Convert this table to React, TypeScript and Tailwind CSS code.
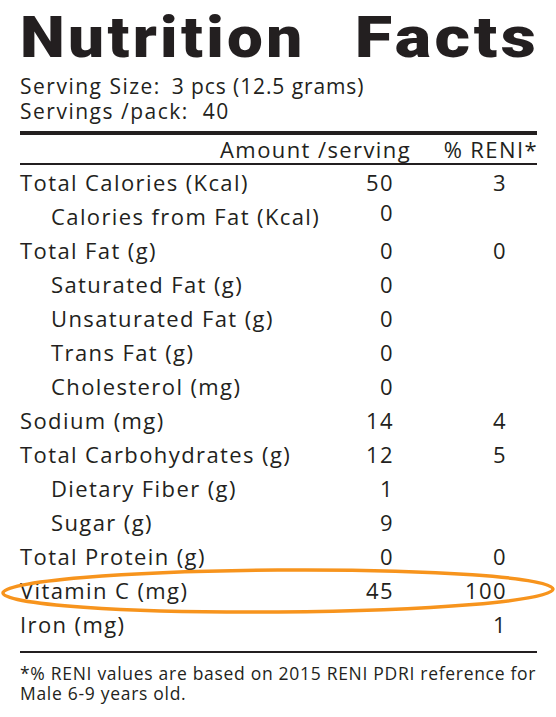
const rows = [
  { label: 'Total Calories (Kcal)', amount: '50', reni: '3' },
  { label: 'Calories from Fat (Kcal)', amount: '0', reni: '', sub: true, raised: true },
  { label: 'Total Fat (g)', amount: '0', reni: '0' },
  { label: 'Saturated Fat (g)', amount: '0', reni: '', sub: true },
  { label: 'Unsaturated Fat (g)', amount: '0', reni: '', sub: true },
  { label: 'Trans Fat (g)', amount: '0', reni: '', sub: true },
  { label: 'Cholesterol (mg)', amount: '0', reni: '', sub: true },
  { label: 'Sodium (mg)', amount: '14', reni: '4' },
  { label: 'Total Carbohydrates (g)', amount: '12', reni: '5' },
  { label: 'Dietary Fiber (g)', amount: '1', reni: '', sub: true },
  { label: 'Sugar (g)', amount: '9', reni: '', sub: true },
  { label: 'Total Protein (g)', amount: '0', reni: '0' },
  { label: 'Vitamin C (mg)', amount: '45', reni: '100' },
  { label: 'Iron (mg)', amount: '', reni: '1' },
];

export default function App() {
  return (
    <div className="relative w-[556px] h-[717px] bg-white text-[#231f20] font-['Open_Sans',sans-serif] overflow-hidden">
      <div className="pl-[20px] pr-[19px]">
        {/* Title */}
        <div className="flex justify-between pt-[8px] text-[58px] leading-[58px] font-black font-['Roboto',sans-serif] tracking-[3px]">
          <span className="inline-block origin-left scale-x-[1.1]">Nutrition</span>
          <span className="inline-block origin-right scale-x-[1.18] -mr-[2px]">Facts</span>
        </div>

        {/* Serving info */}
        <div className="mt-[8px] text-[21px] leading-[25px]">
          <div>
            <span className="tracking-[1.5px]">Serving Size:</span>&nbsp; <span className="tracking-[0.9px]">3 pcs (12.5 grams)</span>
          </div>
          <div className="tracking-[1.5px]">Servings /pack:&nbsp; 40</div>
        </div>

        <div className="mt-[7px] h-[4px] bg-[#231f20]" />

        {/* Header */}
        <div className="flex text-[22px] leading-[28px] tracking-[1.4px]">
          <div className="flex-1 text-right">Amount /serving</div>
          <div className="w-[127px] text-right -mr-[1px]">% RENI*</div>
        </div>

        <div className="h-[2px] bg-[#231f20]" />

        {/* Rows */}
        <div className="text-[22px] leading-[34px] tracking-[1.4px]">
          {rows.map((r) => (
            <div key={r.label} className="flex">
              <div className={`flex-1 ${r.sub ? 'pl-[31px]' : ''}`}>{r.label}</div>
              <div className={`w-[60px] text-right -mr-[1px] ${r.raised ? '-translate-y-[4px]' : ''}`}>{r.amount}</div>
              <div className="w-[114px] text-right">{r.reni}</div>
              <div className="w-[30px]" />
            </div>
          ))}
        </div>

        <div className="mt-[10px] h-[2px] bg-[#231f20]" />

        {/* Footnote */}
        <div className="mt-[10px] text-[17.5px] leading-[20px] tracking-[0.7px]">
          *% RENI values are based on 2015 RENI PDRI reference for
          <br />
          Male 6-9 years old.
        </div>
      </div>

      {/* Highlight */}
      <svg className="absolute left-0 top-[559px]" width="556" height="64" viewBox="0 0 556 64">
        <ellipse cx="278" cy="32" rx="275" ry="21" fill="none" stroke="#f7941d" strokeWidth="3.5" transform="rotate(-0.4 278 32)" />
      </svg>
    </div>
  );
}
